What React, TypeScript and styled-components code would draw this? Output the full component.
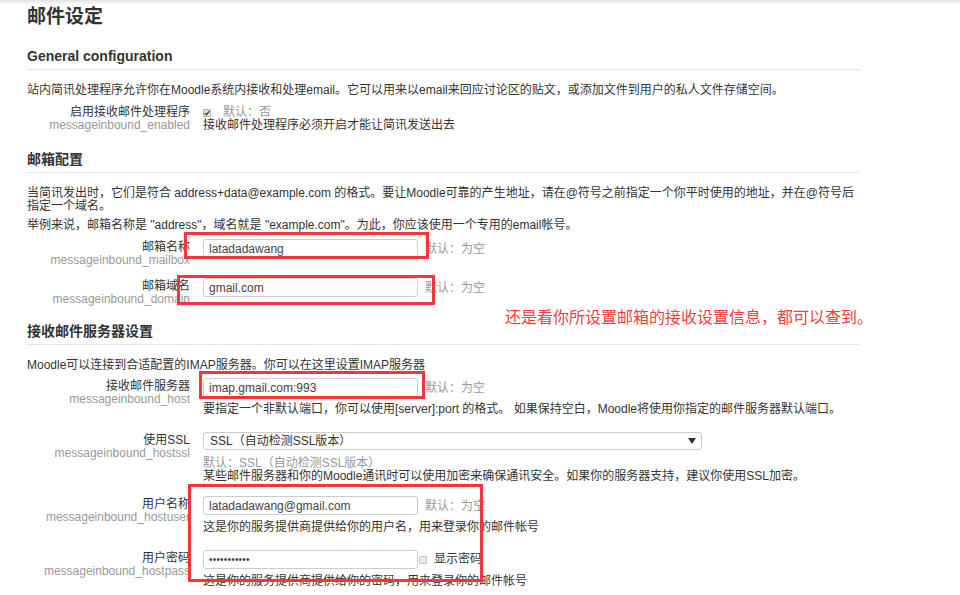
import React from "react";
import styled, { createGlobalStyle } from "styled-components";

const GlobalStyle = createGlobalStyle`
  html, body {
    margin: 0;
    padding: 0;
    overflow: hidden;
  }
  body {
    background: linear-gradient(to bottom, #e2e2e2 0, #ffffff 5px) no-repeat #fff;
    font-family: "Liberation Sans", "Noto Sans CJK SC", sans-serif;
    font-size: 12px;
    line-height: 13px;
    color: #333;
  }
`;

const Page = styled.div`
  position: relative;
  width: 833px;
  padding: 5px 0 0 27px;
`;

const Title = styled.h2`
  margin: 0 0 19px;
  font-size: 19px;
  line-height: 24px;
  font-weight: bold;
  color: #333;
`;

// padding instead of margin so the gap does not collapse into the last row's margin
const Section = styled.section<{ $first?: boolean }>`
  padding-top: ${(p) => (p.$first ? 0 : 6)}px;
`;

const Legend = styled.h3`
  margin: 0 0 14px;
  padding-bottom: 5px;
  border-bottom: 1px solid #e5e5e5;
  font-size: 14px;
  line-height: 16px;
  font-weight: bold;
  color: #333;
`;

const Intro = styled.p<{ $gap?: number }>`
  margin: 0 0 ${(p) => p.$gap ?? 9}px;
  white-space: nowrap;
`;

const Row = styled.div<{ $gap?: number }>`
  display: flex;
  gap: 13px;
  margin-bottom: ${(p) => p.$gap ?? 11}px;
`;

const LabelCol = styled.div<{ $top?: number }>`
  flex: none;
  width: 163px;
  padding-top: ${(p) => p.$top ?? 0}px;
  text-align: right;
  white-space: nowrap;
`;

const LabelTitle = styled.div`
  color: #333;
`;

const SettingName = styled.div`
  color: #999;
`;

const SettingCol = styled.div<{ $pad?: number }>`
  flex: 1;
  min-width: 0;
  padding-bottom: ${(p) => p.$pad ?? 0}px;
`;

const InputLine = styled.div`
  display: flex;
  align-items: flex-start;
  gap: 7px;
`;

const CheckLine = styled.div`
  display: flex;
  align-items: center;
  gap: 12px;
  height: 13px;
`;

const Field = styled.input<{ $dots?: boolean }>`
  box-sizing: border-box;
  width: 215px;
  height: 19px;
  margin: 0;
  padding: 0 5px;
  border: 1px solid #ccc;
  border-radius: 3px;
  background: #fff;
  font-family: inherit;
  font-size: ${(p) => (p.$dots ? 10 : 12)}px;
  letter-spacing: ${(p) => (p.$dots ? "0.2px" : "normal")};
  color: #444;
  outline: none;
`;

const Default = styled.span<{ $top?: number }>`
  margin-top: ${(p) => p.$top ?? 4}px;
  color: #999;
  white-space: nowrap;
`;

const Description = styled.div<{ $gap?: number; $muted?: boolean }>`
  margin-top: ${(p) => p.$gap ?? 0}px;
  color: ${(p) => (p.$muted ? "#999" : "#333")};
  white-space: nowrap;
`;

const SelectBox = styled.div`
  box-sizing: border-box;
  display: flex;
  align-items: center;
  justify-content: space-between;
  width: 499px;
  height: 18px;
  padding: 0 5px 0 6px;
  border: 1px solid #ccc;
  border-radius: 3px;
  color: #333;
`;

const Box = styled.span<{ $checked?: boolean }>`
  box-sizing: border-box;
  display: inline-flex;
  align-items: center;
  justify-content: center;
  flex: none;
  width: 8px;
  height: 8px;
  border: 1px solid ${(p) => (p.$checked ? "#aaa" : "#c4c4c4")};
  border-radius: 1px;
  background: ${(p) => (p.$checked ? "#e2e2e2" : "#e9e9e9")};
`;

const ShowPass = styled.label`
  display: flex;
  align-items: center;
  gap: 7px;
  margin: 3px 0 0 -6px;
  color: #333;
  white-space: nowrap;
`;

const Note = styled.div`
  position: absolute;
  left: 505px;
  top: 308px;
  font-size: 16px;
  line-height: 20px;
  color: #f23c3f;
  white-space: nowrap;
`;

const Mark = styled.div<{ $x: number; $y: number; $w: number; $h: number }>`
  position: absolute;
  left: ${(p) => p.$x}px;
  top: ${(p) => p.$y}px;
  width: ${(p) => p.$w}px;
  height: ${(p) => p.$h}px;
  box-sizing: border-box;
  border: 3px solid #f2363b;
  pointer-events: none;
`;

const marks = [
  { x: 184, y: 232, w: 245, h: 27 },
  { x: 177, y: 275, w: 258, h: 30 },
  { x: 199, y: 371, w: 226, h: 28 },
  { x: 188, y: 484, w: 295, h: 98 },
];

const Check = () => (
  <svg width="6" height="6" viewBox="0 0 6 6">
    <path d="M0.8 3.1 L2.4 4.7 L5.3 1.2" fill="none" stroke="#333" strokeWidth="1.3" />
  </svg>
);

const Arrow = () => (
  <svg width="8" height="6" viewBox="0 0 8 6">
    <polygon points="0,0 8,0 4,6" fill="#333" />
  </svg>
);

interface ILabel {
  title: string;
  name: string;
  top?: number;
}

const Label: React.FC<ILabel> = ({ title, name, top }) => (
  <LabelCol $top={top}>
    <LabelTitle>{title}</LabelTitle>
    <SettingName>{name}</SettingName>
  </LabelCol>
);

interface ITextSetting extends ILabel {
  value: string;
  desc?: string;
}

const TextSetting: React.FC<ITextSetting> = ({ title, name, value, desc }) => (
  <Row>
    <Label title={title} name={name} top={2} />
    <SettingCol $pad={desc ? 5 : 0}>
      <InputLine>
        <Field type="text" readOnly value={value} />
        <Default>默认：为空</Default>
      </InputLine>
      {desc && <Description $gap={6}>{desc}</Description>}
    </SettingCol>
  </Row>
);

const App: React.FC = () => {
  return (
    <Page>
      <GlobalStyle />
      <Title>邮件设定</Title>

      <Section $first>
        <Legend>General configuration</Legend>
        <Intro>
          站内简讯处理程序允许你在Moodle系统内接收和处理email。它可以用来以email来回应讨论区的贴文，或添加文件到用户的私人文件存储空间。
        </Intro>
        <Row $gap={13}>
          <Label title="启用接收邮件处理程序" name="messageinbound_enabled" />
          <SettingCol>
            <CheckLine>
              <Box $checked>
                <Check />
              </Box>
              <Default $top={0}>默认：否</Default>
            </CheckLine>
            <Description>接收邮件处理程序必须开启才能让简讯发送出去</Description>
          </SettingCol>
        </Row>
      </Section>

      <Section>
        <Legend>邮箱配置</Legend>
        <Intro $gap={6}>
          当简讯发出时，它们是符合 address+data@example.com 的格式。要让Moodle可靠的产生地址，请在@符号之前指定一个你平时使用的地址，并在@符号后
          <br />
          指定一个域名。
        </Intro>
        <Intro $gap={7}>
          举例来说，邮箱名称是 "address"，域名就是 "example.com"。为此，你应该使用一个专用的email帐号。
        </Intro>
        <TextSetting title="邮箱名称" name="messageinbound_mailbox" value="latadadawang" />
        <TextSetting title="邮箱域名" name="messageinbound_domain" value="gmail.com" />
      </Section>

      <Section>
        <Legend>接收邮件服务器设置</Legend>
        <Intro $gap={6}>Moodle可以连接到合适配置的IMAP服务器。你可以在这里设置IMAP服务器</Intro>
        <TextSetting
          title="接收邮件服务器"
          name="messageinbound_host"
          value="imap.gmail.com:993"
          desc="要指定一个非默认端口，你可以使用[server]:port 的格式。 如果保持空白，Moodle将使用你指定的邮件服务器默认端口。"
        />
        <Row>
          <Label title="使用SSL" name="messageinbound_hostssl" top={2} />
          <SettingCol $pad={2}>
            <SelectBox>
              <span>SSL（自动检测SSL版本）</span>
              <Arrow />
            </SelectBox>
            <Description $gap={7} $muted>
              默认：SSL（自动检测SSL版本）
            </Description>
            <Description>
              某些邮件服务器和你的Moodle通讯时可以使用加密来确保通讯安全。如果你的服务器支持，建议你使用SSL加密。
            </Description>
          </SettingCol>
        </Row>
        <TextSetting
          title="用户名称"
          name="messageinbound_hostuser"
          value="latadadawang@gmail.com"
          desc="这是你的服务提供商提供给你的用户名，用来登录你的邮件帐号"
        />
        <Row>
          <Label title="用户密码" name="messageinbound_hostpass" top={2} />
          <SettingCol $pad={5}>
            <InputLine>
              <Field type="text" readOnly value="•••••••••••" $dots />
              <ShowPass>
                <Box />
                显示密码
              </ShowPass>
            </InputLine>
            <Description $gap={6}>这是你的服务提供商提供给你的密码，用来登录你的邮件帐号</Description>
          </SettingCol>
        </Row>
      </Section>

      <Note>还是看你所设置邮箱的接收设置信息，都可以查到。</Note>
      {marks.map((m, i) => (
        <Mark key={i} $x={m.x} $y={m.y} $w={m.w} $h={m.h} />
      ))}
    </Page>
  );
};

export default App;
